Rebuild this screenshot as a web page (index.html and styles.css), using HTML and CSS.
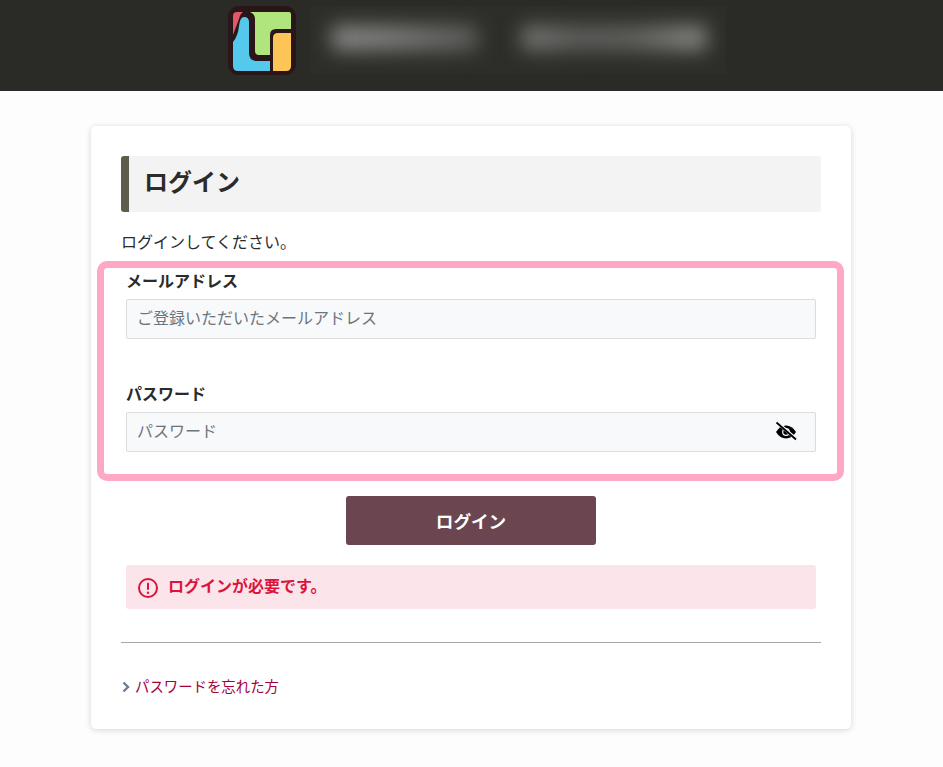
FILE: index.html
```html
<!DOCTYPE html>
<html lang="ja">
<head>
  <meta charset="utf-8">
  <title>ログイン</title>
  <link rel="stylesheet" href="styles.css">
</head>
<body>
  <header class="site-header">
    <svg class="logo" width="68" height="69" viewBox="0 0 68 69">
      <rect x="0" y="0" width="68" height="69" rx="11" fill="#2a1518"/>
      <path d="M5 10 Q5 6 9 6 H15 Q12 8 11 13 L5 29 Z" fill="#e0596b"/>
      <path d="M22 6 H61 Q63 6 63 8 V23 H48 Q42 23 42 29 V49 H31 Q27 49 27 45 V13 Q27 8 22 6 Z" fill="#b0e57e"/>
      <path d="M16 11 Q21 11 21 16 V47 Q21 55 29 55 H42 V65 H10 Q5 65 5 60 V36 Q10 30 11 20 Q12 11 16 11 Z" fill="#55c9ec"/>
      <path d="M45 32 Q45 27 50 27 H63 V60 Q63 65 58 65 H45 Z" fill="#fdc557"/>
    </svg>
    <div class="header-title" aria-hidden="true">
      <span class="blur-block blur-a"></span>
      <span class="blur-block blur-b"></span>
    </div>
  </header>

  <main class="card">
    <h1 class="page-title">ログイン</h1>
    <p class="lead">ログインしてください。</p>

    <form class="login-form">
      <div class="form-group">
        <label class="form-label" for="email">メールアドレス</label>
        <input class="form-input" id="email" type="text" placeholder="ご登録いただいたメールアドレス">
      </div>
      <div class="form-group">
        <label class="form-label" for="password">パスワード</label>
        <div class="input-wrap">
          <input class="form-input" id="password" type="password" placeholder="パスワード">
          <svg class="eye" width="22" height="20" viewBox="0 0 22 20">
            <path d="M1 11 Q5 4.5 11 4.5 Q17 4.5 21 11 Q17 17.5 11 17.5 Q5 17.5 1 11 Z" fill="#000"/>
            <circle cx="11" cy="11" r="3.9" fill="#f8f9fa"/>
            <circle cx="11" cy="11" r="2.7" fill="#000"/>
            <path d="M4 3 L20 17" stroke="#f8f9fa" stroke-width="3"/>
            <path d="M1.5 1.5 L21 18.5" stroke="#000" stroke-width="1.8"/>
          </svg>
        </div>
      </div>
      <div class="form-actions">
        <button class="login-button" type="button">ログイン</button>
      </div>
    </form>

    <div class="alert">
      <svg class="alert-icon" width="22" height="22" viewBox="0 0 22 22">
        <circle cx="11" cy="11" r="9" fill="none" stroke="#dc143c" stroke-width="2"/>
        <rect x="10" y="5.5" width="2" height="7.5" rx="1" fill="#dc143c"/>
        <circle cx="11" cy="15.7" r="1.2" fill="#dc143c"/>
      </svg>
      <span class="alert-text">ログインが必要です。</span>
    </div>

    <hr class="divider">

    <a class="forgot-link" href="#">
      <svg class="chevron" width="8" height="12" viewBox="0 0 8 12">
        <path d="M1.5 1.5 L6 6 L1.5 10.5" fill="none" stroke="#6f7d90" stroke-width="2.4"/>
      </svg>
      パスワードを忘れた方
    </a>
  </main>

  <!-- annotation drawn over the form -->
  <div class="highlight"></div>
</body>
</html>
```

FILE: styles.css
```css
* {
  box-sizing: border-box;
}
body {
  margin: 0;
  height: 767px;
  overflow: hidden;
  position: relative;
  background-color: #fdfdfd;
  color: #2b2b2b;
  font-family: "Noto Sans CJK JP", "Noto Sans", sans-serif;
  font-size: 16px;
}
.site-header {
  height: 91px;
  background-color: #2a2b26;
  display: flex;
  align-items: flex-start;
  padding: 6px 0 0 228px;
}
.header-title {
  display: flex;
  gap: 44px;
  width: 416px;
  height: 68px;
  margin-left: 14px;
  padding: 20px 0 0 22px;
  overflow: hidden;
  background-color: #2d2e29;
}
.blur-block {
  display: block;
  height: 24px;
  filter: blur(10px);
}
.blur-a {
  width: 146px;
  background: linear-gradient(90deg, #8c8c8a, #80807e 40%, #6b6c69 75%, #5c5d5a);
}
.blur-b {
  width: 184px;
  background: linear-gradient(90deg, #7a7b78, #5f605d 30%, #62635f 60%, #8e8f8c);
}
.card {
  width: 760px;
  height: 603px;
  margin: 35px 0 0 91px;
  padding: 30px;
  background-color: #fff;
  border-radius: 5px;
  box-shadow: 0 1px 6px rgba(0, 0, 0, 0.16);
}
.page-title {
  margin: 0;
  height: 56px;
  padding-left: 15px;
  line-height: 50px;
  font-size: 24px;
  font-weight: 700;
  background-color: #f3f3f3;
  border-left: 8px solid #5f5c4b;
  border-radius: 3px;
}
.lead {
  margin: 17px 0 0;
  height: 24px;
  line-height: 24px;
}
.login-form {
  padding: 0 5px;
  margin-top: 17px;
}
.form-group {
  height: 113px;
}
.form-label {
  display: block;
  height: 20px;
  line-height: 20px;
  margin-bottom: 9px;
  font-weight: 700;
  font-size: 16px;
}
.form-input {
  display: block;
  width: 100%;
  height: 40px;
  padding: 0 10px 4px;
  background-color: #f8f9fa;
  border: 1px solid #dcdcdc;
  border-radius: 2px;
  font-family: inherit;
  font-size: 16px;
  color: #2b2b2b;
}
.form-input::placeholder {
  color: #6c757d;
  opacity: 1;
}
.input-wrap {
  position: relative;
}
.eye {
  position: absolute;
  top: 9px;
  right: 19px;
}
.form-actions {
  display: flex;
  justify-content: center;
  margin-bottom: 20px;
}
.login-button {
  width: 250px;
  height: 49px;
  background-color: #6b4550;
  color: #fff;
  border: none;
  border-radius: 3px;
  font-family: inherit;
  font-size: 17.6px;
  font-weight: 700;
}
.alert {
  display: flex;
  align-items: center;
  gap: 9px;
  height: 44px;
  margin: 0 5px;
  padding: 0 11px;
  background-color: #fbe4ea;
  border-radius: 3px;
  color: #dc143c;
  font-weight: 700;
}
.alert-icon {
  margin-top: 2px;
}
.alert-text {
  margin-bottom: 5px;
}
.divider {
  margin: 33px 0 0;
  border: none;
  border-top: 1px solid #a8a8a8;
}
.forgot-link {
  display: flex;
  align-items: center;
  gap: 5px;
  margin-top: 32px;
  height: 22px;
  line-height: 22px;
  font-size: 14.4px;
  color: #a4003c;
  text-decoration: none;
}
.chevron {
  margin-left: 1px;
  margin-top: 1px;
}
.highlight {
  position: absolute;
  left: 97px;
  top: 261px;
  width: 747px;
  height: 220px;
  border: 7px solid #ffa8c5;
  border-radius: 10px;
}
```
